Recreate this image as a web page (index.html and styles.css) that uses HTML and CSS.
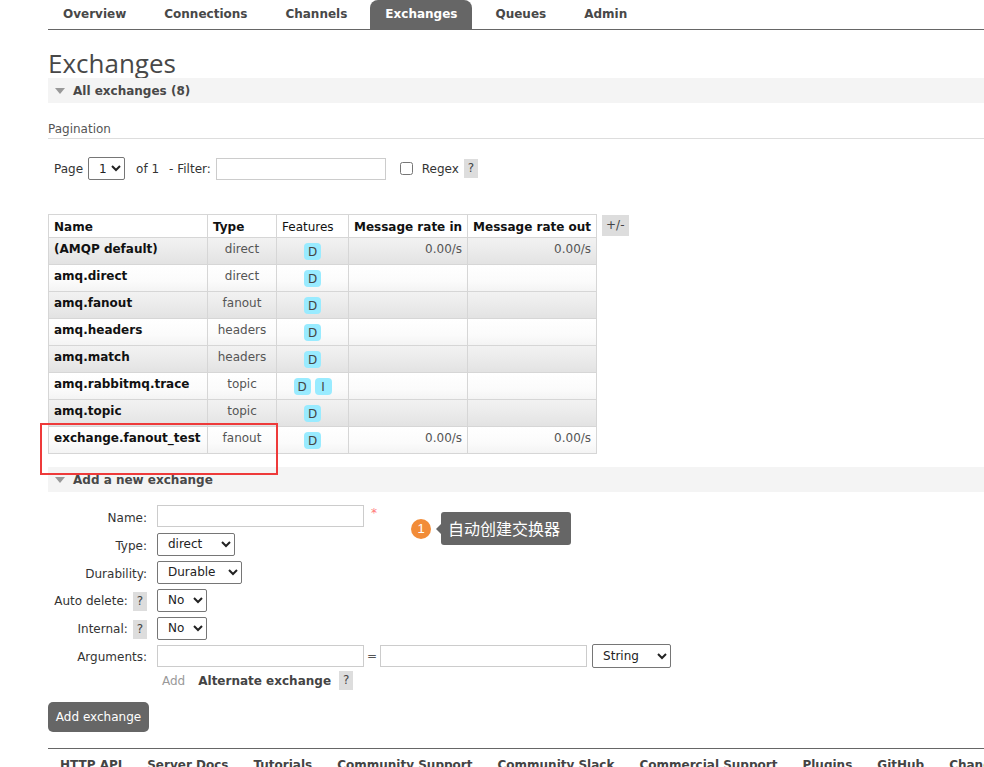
FILE: index.html
```html
<!DOCTYPE html>
<html>
<head>
<meta charset="utf-8">
<link rel="stylesheet" href="styles.css">
</head>
<body>
<div class="page">
  <ul class="nav">
    <li class="tab">Overview</li>
    <li class="tab">Connections</li>
    <li class="tab">Channels</li>
    <li class="tab active">Exchanges</li>
    <li class="tab">Queues</li>
    <li class="tab">Admin</li>
  </ul>

  <div class="main">
    <h1 class="title">Exchanges</h1>
    <div class="section-bar"><span class="tri"></span>All exchanges (8)</div>

    <h3 class="sub">Pagination</h3>
    <div class="pager">
      <span>Page</span>
      <select class="sel sel-page"><option>1</option></select>
      <span class="of">of 1</span>
      <span>- Filter:</span>
      <input class="inp inp-filter" type="text">
      <input class="chk" type="checkbox">
      <span>Regex</span>
      <span class="help">?</span>
    </div>

    <div class="table-wrap">
      <table class="list">
        <thead>
          <tr>
            <th class="c-name">Name</th>
            <th class="c-type">Type</th>
            <th class="c-feat">Features</th>
            <th class="c-in">Message rate in</th>
            <th class="c-out">Message rate out</th>
          </tr>
        </thead>
        <tbody>
          <tr class="alt1"><td class="n">(AMQP default)</td><td class="t">direct</td><td class="f"><span class="badge">D</span></td><td class="r">0.00/s</td><td class="r">0.00/s</td></tr>
          <tr class="alt2"><td class="n">amq.direct</td><td class="t">direct</td><td class="f"><span class="badge">D</span></td><td class="r"></td><td class="r"></td></tr>
          <tr class="alt1"><td class="n">amq.fanout</td><td class="t">fanout</td><td class="f"><span class="badge">D</span></td><td class="r"></td><td class="r"></td></tr>
          <tr class="alt2"><td class="n">amq.headers</td><td class="t">headers</td><td class="f"><span class="badge">D</span></td><td class="r"></td><td class="r"></td></tr>
          <tr class="alt1"><td class="n">amq.match</td><td class="t">headers</td><td class="f"><span class="badge">D</span></td><td class="r"></td><td class="r"></td></tr>
          <tr class="alt2"><td class="n">amq.rabbitmq.trace</td><td class="t">topic</td><td class="f"><span class="badge">D</span><span class="badge">I</span></td><td class="r"></td><td class="r"></td></tr>
          <tr class="alt1"><td class="n">amq.topic</td><td class="t">topic</td><td class="f"><span class="badge">D</span></td><td class="r"></td><td class="r"></td></tr>
          <tr class="alt2"><td class="n">exchange.fanout_test</td><td class="t">fanout</td><td class="f"><span class="badge">D</span></td><td class="r">0.00/s</td><td class="r">0.00/s</td></tr>
        </tbody>
      </table>
      <span class="help plusminus">+/-</span>
    </div>

    <div class="section-bar bar2"><span class="tri"></span>Add a new exchange</div>

    <div class="form">
      <label class="lbl">Name:</label>
      <div class="ctl"><input class="inp inp-wide" type="text"><span class="req">*</span></div>

      <label class="lbl">Type:</label>
      <div class="ctl"><select class="sel sel-type"><option>direct</option></select></div>

      <label class="lbl">Durability:</label>
      <div class="ctl"><select class="sel sel-dur"><option>Durable</option></select></div>

      <label class="lbl">Auto delete: <span class="help">?</span></label>
      <div class="ctl"><select class="sel sel-no"><option>No</option></select></div>

      <label class="lbl">Internal: <span class="help">?</span></label>
      <div class="ctl"><select class="sel sel-no"><option>No</option></select></div>

      <label class="lbl">Arguments:</label>
      <div class="ctl args">
        <input class="inp inp-wide" type="text"><span class="eq">=</span><input class="inp inp-wide" type="text">
        <select class="sel sel-str"><option>String</option></select>
      </div>

      <span class="lbl"></span>
      <div class="ctl alt-row"><span class="add">Add</span><span class="alt">Alternate exchange</span><span class="help">?</span></div>
    </div>

    <button class="btn">Add exchange</button>

    <div class="footer">
      <span>HTTP API</span><span>Server Docs</span><span>Tutorials</span><span>Community Support</span><span>Community Slack</span><span>Commercial Support</span><span>Plugins</span><span>GitHub</span><span>Changelog</span>
    </div>
  </div>

  <div class="redbox"></div>
  <div class="note">
    <span class="note-num">1</span>
    <span class="note-tip">自动创建交换器</span>
  </div>
</div>
</body>
</html>
```

FILE: styles.css
```css
html, body {
  margin: 0;
  padding: 0;
  overflow: hidden;
  background: #fff;
}
body {
  font-family: "DejaVu Sans", Verdana, sans-serif;
  font-size: 12px;
  color: #484848;
}
.page {
  position: relative;
  width: 984px;
  height: 767px;
  overflow: hidden;
}
.nav {
  list-style: none;
  margin: 0 0 0 48px;
  padding: 0;
  display: flex;
  gap: 8px;
  border-bottom: 1px solid #666;
  height: 29px;
}
.tab {
  padding: 0 15px;
  height: 29px;
  line-height: 28px;
  font-weight: bold;
  color: #484848;
  border-radius: 8px 8px 0 0;
}
.tab.active {
  background: #666;
  color: #fff;
}
.main {
  padding-left: 48px;
}
.title {
  margin: 18px 0 0;
  font-family: "Open Sans", sans-serif;
  font-weight: 400;
  font-size: 26px;
  line-height: 30px;
  color: #484848;
}
.section-bar {
  height: 25px;
  line-height: 26px;
  background: #f4f4f4;
  font-weight: bold;
  color: #484848;
  padding-left: 25px;
  position: relative;
}
.tri {
  position: absolute;
  left: 7px;
  top: 10px;
  width: 0;
  height: 0;
  border-left: 5px solid transparent;
  border-right: 5px solid transparent;
  border-top: 6px solid #999;
}
.sub {
  margin: 18px 0 0;
  font-size: 12px;
  font-weight: normal;
  color: #555;
  line-height: 16px;
  padding-bottom: 1px;
  border-bottom: 1px solid #ddd;
}
.pager {
  margin-top: 18px;
  display: flex;
  align-items: center;
  height: 23px;
  padding-left: 6px;
  color: #333;
}
.sel {
  font-family: "DejaVu Sans", Verdana, sans-serif;
  font-size: 12px;
  height: 23px;
  border: 1px solid #767676;
  border-radius: 2px;
  background: #fff;
  color: #222;
  padding: 0 2px 0 6px;
}
.sel-page { width: 37px; margin-left: 5px; }
.of { margin: 0 10px 0 11px; }
.inp {
  height: 22px;
  box-sizing: border-box;
  border: 1px solid #ccc;
  padding: 2px 4px;
  font-family: inherit;
  font-size: 12px;
}
.inp-filter { width: 170px; margin-left: 5px; }
.chk { margin: 0 9px 0 14px; width: 13px; height: 13px; }
.help {
  display: inline-block;
  background: #ddd;
  color: #444;
  padding: 0 4px;
  line-height: 19px;
  margin-left: 5px;
}
.table-wrap {
  margin-top: 34px;
  display: flex;
  align-items: flex-start;
}
.list {
  border-collapse: collapse;
  border: 1px solid #d6d6d6;
}
.list th, .list td {
  border: 1px solid #d6d6d6;
  padding: 4px 5px 2px;
  vertical-align: top;
  line-height: 15px;
  color: #111;
  white-space: nowrap;
}
.list th {
  text-align: left;
  font-weight: bold;
  background: #fff;
  height: 16px;
  line-height: 16px;
}
.c-name { width: 148px; }
.c-type { width: 58px; }
.c-feat { width: 61px; font-weight: normal !important; }
.c-in { width: 106px; }
.c-out { width: 115px; }
.list td { height: 20px; }
.list td.n { font-weight: bold; }
.list td.t { text-align: center; color: #555; }
.list td.f { text-align: center; padding-top: 5px; padding-bottom: 3px; height: 18px; }
.list td.r { text-align: right; color: #555; }
.alt1 { background: linear-gradient(to bottom, #f2f2f2 0%, #e9e9e9 60%, #e2e2e2 100%); }
.alt2 { background: linear-gradient(to bottom, #ffffff 0%, #fbfbfb 60%, #f3f3f3 100%); }
.badge {
  display: inline-block;
  min-width: 11px;
  height: 17px;
  line-height: 18px;
  padding: 0 3px;
  border-radius: 4px;
  background: #99ebff;
  color: #444;
  margin: 0 2px;
}
.plusminus {
  margin-left: 5px;
  margin-top: 1px;
  line-height: 21px;
  padding: 0 4px;
}
.bar2 { margin-top: 13px; }
.form {
  margin-top: 10px;
  display: grid;
  grid-template-columns: 102px auto;
  grid-template-rows: 28px 28px 28px 28px 28px 27px 22px;
  column-gap: 7px;
  align-items: center;
}
.lbl {
  text-align: right;
  color: #333;
  padding-right: 3px;
  padding-top: 3px;
}
.lbl .help { margin-left: 1px; }
.ctl {
  display: flex;
  align-items: center;
}
.inp-wide { width: 207px; }
.req { color: #f77; margin-left: 7px; margin-top: -6px; }
.sel-type { width: 78px; }
.sel-dur { width: 85px; }
.sel-no { width: 50px; }
.sel-str { width: 79px; margin-left: 5px; height: 24px; }
.eq { margin: 0 3px; color: #555; }
.alt-row { padding-top: 1px; }
.add { color: #999; margin-left: 5px; }
.alt { font-weight: bold; color: #444; margin-left: 13px; }
.alt-row .help { margin-left: 8px; }
.btn {
  display: block;
  margin-top: 11px;
  width: 101px;
  height: 30px;
  border: none;
  border-radius: 5px;
  background: #666;
  color: #fff;
  font-family: "DejaVu Sans", Verdana, sans-serif;
  font-size: 12px;
  padding: 0;
}
.footer {
  margin-top: 16px;
  border-top: 1px solid #666;
  display: flex;
  gap: 25px;
  padding: 9px 0 0 12px;
  white-space: nowrap;
  font-weight: bold;
  color: #444;
}
.redbox {
  position: absolute;
  left: 40px;
  top: 423px;
  width: 234px;
  height: 48px;
  border: 2px solid #ee3a3a;
}
.note {
  position: absolute;
  left: 411px;
  top: 512px;
  display: flex;
  align-items: center;
}
.note-num {
  width: 20px;
  height: 20px;
  border-radius: 50%;
  background: #f28c38;
  color: #fff;
  font-family: "Liberation Sans", sans-serif;
  font-size: 13px;
  line-height: 20px;
  text-align: center;
}
.note-tip {
  position: relative;
  margin-left: 10px;
  background: #666;
  color: #fff;
  border-radius: 3px;
  height: 33px;
  line-height: 33px;
  padding: 0 11px 0 7px;
  font-family: "Noto Sans CJK SC", sans-serif;
  font-size: 16px;
}
.note-tip::before {
  content: "";
  position: absolute;
  left: -5px;
  top: 12px;
  border-top: 5px solid transparent;
  border-bottom: 5px solid transparent;
  border-right: 5px solid #666;
}
```
